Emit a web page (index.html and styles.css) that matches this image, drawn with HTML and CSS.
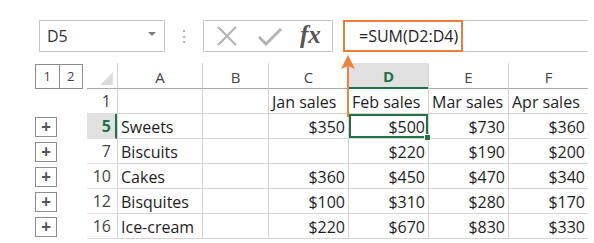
FILE: index.html
```html
<!DOCTYPE html>
<html lang="en">
<head>
    <meta charset="UTF-8">
    <title>Grouped rows</title>
    <link rel="stylesheet" href="styles.css">
</head>
<body>
    <div class="toolbar">
        <div class="name-box">
            <span>D5</span>
            <span class="drop"></span>
        </div>
        <div class="grip">&#8942;</div>
        <div class="fbuttons">
            <svg class="ficon" width="22" height="22" viewBox="0 0 22 22"><path d="M2 2 L20 20 M20 2 L2 20" stroke="#b4b4b4" stroke-width="2.2" fill="none"/></svg>
            <svg class="ficon" width="26" height="22" viewBox="0 0 26 22"><path d="M2 12 L9 19 L24 4" stroke="#b4b4b4" stroke-width="3" fill="none"/></svg>
            <span class="fx">fx</span>
        </div>
        <div class="formula">
            <span class="formula-text">=SUM(D2:D4)</span>
        </div>
    </div>

    <div class="sheet">
        <div class="outline-head"><span>1</span><span>2</span></div>
        <div class="corner"></div>
        <div class="colhead">A</div>
        <div class="colhead">B</div>
        <div class="colhead">C</div>
        <div class="colhead active">D</div>
        <div class="colhead">E</div>
        <div class="colhead">F</div>

        <div class="outline"></div>
        <div class="rowhead">1</div>
        <div class="cell"></div>
        <div class="cell"></div>
        <div class="cell">Jan sales</div>
        <div class="cell">Feb sales</div>
        <div class="cell">Mar sales</div>
        <div class="cell">Apr sales</div>

        <div class="outline"><span class="plus">+</span></div>
        <div class="rowhead active">5</div>
        <div class="cell">Sweets</div>
        <div class="cell"></div>
        <div class="cell num">$350</div>
        <div class="cell num selected">$500<span class="handle"></span></div>
        <div class="cell num">$730</div>
        <div class="cell num">$360</div>

        <div class="outline"><span class="plus">+</span></div>
        <div class="rowhead">7</div>
        <div class="cell">Biscuits</div>
        <div class="cell"></div>
        <div class="cell num"></div>
        <div class="cell num">$220</div>
        <div class="cell num">$190</div>
        <div class="cell num">$200</div>

        <div class="outline"><span class="plus">+</span></div>
        <div class="rowhead">10</div>
        <div class="cell">Cakes</div>
        <div class="cell"></div>
        <div class="cell num">$360</div>
        <div class="cell num">$450</div>
        <div class="cell num">$470</div>
        <div class="cell num">$340</div>

        <div class="outline"><span class="plus">+</span></div>
        <div class="rowhead">12</div>
        <div class="cell">Bisquites</div>
        <div class="cell"></div>
        <div class="cell num">$100</div>
        <div class="cell num">$310</div>
        <div class="cell num">$280</div>
        <div class="cell num">$170</div>

        <div class="outline"><span class="plus">+</span></div>
        <div class="rowhead">16</div>
        <div class="cell">Ice-cream</div>
        <div class="cell"></div>
        <div class="cell num">$220</div>
        <div class="cell num">$670</div>
        <div class="cell num">$830</div>
        <div class="cell num">$330</div>

        <!-- arrow pointing from cell to formula bar -->
        <svg class="arrow" width="16" height="62" viewBox="0 0 16 62">
            <path d="M8 6 L8 62" stroke="#f0813a" stroke-width="2" fill="none"/>
            <path d="M1 14 L8 0 L15 14 L8 11 Z" fill="#f0813a"/>
        </svg>
    </div>
</body>
</html>
```

FILE: styles.css
```css
body {
    margin: 0;
    background: #fff;
    font-family: "Open Sans", Lato, sans-serif;
    color: #222;
}

/* Formula bar */
.toolbar {
    display: flex;
    align-items: center;
    height: 32px;
    margin-top: 20px;
    padding-left: 39px;
}

.name-box {
    box-sizing: border-box;
    width: 126px;
    height: 32px;
    border: 1px solid #c6c6c6;
    display: flex;
    align-items: center;
    justify-content: space-between;
    padding: 0 8px 0 7px;
    font-size: 16px;
    color: #333;
}

.drop {
    width: 0;
    height: 0;
    border-left: 4px solid transparent;
    border-right: 4px solid transparent;
    border-top: 4px solid #7a7a7a;
    margin-top: -4px;
}

.grip {
    width: 38px;
    text-align: center;
    color: #a6a6a6;
    font-size: 16px;
}

.fbuttons {
    box-sizing: border-box;
    width: 130px;
    height: 32px;
    border: 1px solid #c6c6c6;
    display: flex;
    align-items: center;
    padding-left: 12px;
    gap: 19px;
}

.fx {
    font-family: "Liberation Serif", serif;
    font-style: italic;
    font-weight: bold;
    font-size: 25px;
    color: #555;
    margin-left: -2px;
    margin-top: -3px;
}

.formula {
    box-sizing: border-box;
    width: 245px;
    height: 32px;
    margin-left: 10px;
    border-top: 1px solid #c6c6c6;
    border-bottom: 1px solid #c6c6c6;
    display: flex;
    align-items: center;
}

.formula-text {
    box-sizing: border-box;
    width: 120px;
    height: 32px;
    border: 2px solid #ef7d35;
    display: flex;
    align-items: center;
    padding-left: 14px;
    font-size: 16px;
    color: #222;
}

/* Sheet grid */
.sheet {
    position: relative;
    display: grid;
    grid-template-columns: 52px 30px 85px 66px 80px 80px 80px 80px;
    grid-template-rows: 26px repeat(6, 25px);
    margin-top: 11px;
    margin-left: 35px;
    font-size: 16px;
}

.outline-head {
    display: flex;
    align-self: center;
    width: 48px;
    height: 25px;
    box-sizing: border-box;
    border: 1px solid #8c8c8c;
    font-size: 13px;
    color: #444;
}

.outline-head span {
    flex: 1;
    display: flex;
    align-items: center;
    justify-content: center;
}

.outline-head span + span {
    border-left: 1px solid #8c8c8c;
}

.outline {
    display: flex;
    align-items: center;
}

.plus {
    box-sizing: border-box;
    width: 22px;
    height: 20px;
    border: 1px solid #8c8c8c;
    display: flex;
    align-items: center;
    justify-content: center;
    font-size: 17px;
    font-weight: bold;
    color: #555;
}

.corner {
    position: relative;
    border-bottom: 1px solid #ababab;
}

.corner::after {
    content: "";
    position: absolute;
    right: 4px;
    bottom: 3px;
    border-left: 13px solid transparent;
    border-bottom: 13px solid #dcdcdc;
}

.colhead {
    box-sizing: border-box;
    display: flex;
    align-items: center;
    justify-content: center;
    padding-top: 2px;
    border-left: 1px solid #d4d4d4;
    border-bottom: 1px solid #ababab;
    color: #444;
    font-size: 15px;
}

.colhead.active {
    background: #e1e1e1;
    color: #217346;
    font-weight: bold;
    border-bottom: 2px solid #217346;
}

.rowhead {
    box-sizing: border-box;
    display: flex;
    align-items: center;
    justify-content: flex-end;
    padding-right: 6px;
    border-bottom: 1px solid #e1e1e1;
    color: #444;
}

.rowhead.active {
    background: #e1e1e1;
    color: #217346;
    font-weight: bold;
    border-right: 2px solid #217346;
    padding-right: 4px;
}

.cell {
    box-sizing: border-box;
    display: flex;
    align-items: center;
    padding: 2px 3px 0 3px;
    border-left: 1px solid #d4d4d4;
    border-bottom: 1px solid #d4d4d4;
    white-space: nowrap;
    overflow: hidden;
    color: #1e1e1e;
}

.cell.num {
    justify-content: flex-end;
}

.cell.selected {
    position: relative;
    overflow: visible;
    box-shadow: 0 0 0 2px #217346 inset;
}

.handle {
    position: absolute;
    right: -3px;
    bottom: -3px;
    width: 5px;
    height: 5px;
    background: #217346;
    border: 1px solid #fff;
}

.arrow {
    position: absolute;
    left: 305px;
    top: -8px;
}
```
